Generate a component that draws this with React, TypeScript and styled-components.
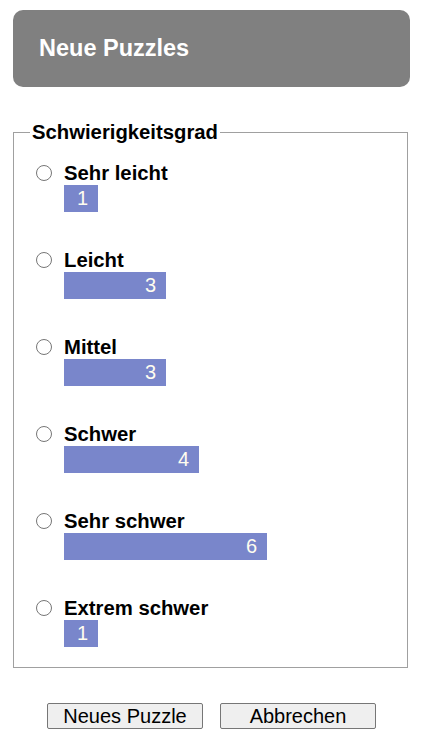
import React from 'react';
import styled, { createGlobalStyle } from 'styled-components';

const levels = [
  { name: 'Sehr leicht', count: 1 },
  { name: 'Leicht', count: 3 },
  { name: 'Mittel', count: 3 },
  { name: 'Schwer', count: 4 },
  { name: 'Sehr schwer', count: 6 },
  { name: 'Extrem schwer', count: 1 },
];

// longest bar (6) is 203px wide
const UNIT = 203 / 6;

const App = () => {
  return (
    <>
      <GlobalStyle />
      <Page>
        <Header>Neue Puzzles</Header>
        <Fieldset>
          <Legend>Schwierigkeitsgrad</Legend>
          <Levels>
            {levels.map((level) => (
              <Level key={level.name}>
                <Radio type="radio" name="level" />
                <LevelBody>
                  <LevelName>{level.name}</LevelName>
                  <Bar style={{ width: Math.round(level.count * UNIT) }}>{level.count}</Bar>
                </LevelBody>
              </Level>
            ))}
          </Levels>
        </Fieldset>
        <Buttons>
          <Button>Neues Puzzle</Button>
          <Button>Abbrechen</Button>
        </Buttons>
      </Page>
    </>
  );
};

export default App;

const GlobalStyle = createGlobalStyle`
  body {
    margin: 0;
    background: #fff;
    font-family: "Liberation Sans", Arial, sans-serif;
  }
`;

const Page = styled.div`
  width: 423px;
  padding-top: 10px;
`;

const Header = styled.h1`
  margin: 0 13px 0 13px;
  height: 77px;
  box-sizing: border-box;
  padding-left: 26px;
  display: flex;
  align-items: center;
  background: #808080;
  border-radius: 10px;
  color: #fff;
  font-size: 23.5px;
  font-weight: bold;
`;

const Fieldset = styled.fieldset`
  margin: 34px 15px 0 13px;
  padding: 0 0 20px 16px;
  border: 1px solid #a0a0a0;
`;

const Legend = styled.legend`
  padding: 0 2px;
  font-size: 20.3px;
  font-weight: bold;
  line-height: 23px;
`;

const Levels = styled.div`
  display: flex;
  flex-direction: column;
  gap: 36px;
  padding-top: 17px;
`;

const Level = styled.div`
  display: flex;
  align-items: flex-start;
  gap: 12px;
`;

const Radio = styled.input`
  appearance: none;
  margin: 4px 0 0 6px;
  width: 16px;
  height: 16px;
  border: 1.5px solid #767676;
  border-radius: 50%;
  background: #fff;
  box-sizing: border-box;
`;

const LevelBody = styled.div`
  display: flex;
  flex-direction: column;
`;

const LevelName = styled.div`
  font-size: 20.3px;
  font-weight: bold;
  line-height: 24px;
`;

const Bar = styled.div`
  height: 27px;
  box-sizing: border-box;
  padding-right: 10px;
  background: #7986cb;
  color: #fffdf0;
  font-size: 20px;
  line-height: 27px;
  text-align: right;
`;

const Buttons = styled.div`
  display: flex;
  justify-content: center;
  gap: 17px;
  margin-top: 35px;
`;

const Button = styled.button`
  width: 156px;
  height: 26px;
  padding: 0;
  background: #efefef;
  border: 1px solid #767676;
  border-radius: 2px;
  color: #000;
  font-family: "Liberation Sans", Arial, sans-serif;
  font-size: 20px;
  line-height: 24px;
`;
